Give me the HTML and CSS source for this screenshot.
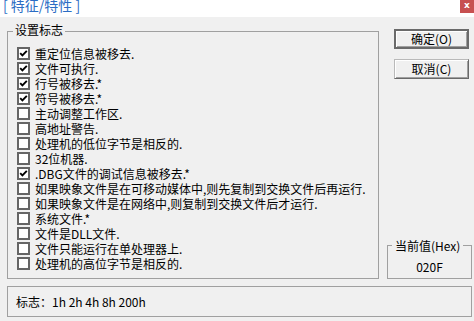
FILE: index.html
```html
<!DOCTYPE html>
<html lang="zh-CN">
<head>
<meta charset="utf-8">
<title>特征/特性</title>
<link rel="stylesheet" href="styles.css">
</head>
<body>
<div class="titlebar">
  <span class="title">[ 特征/特性 ]</span>
  <span class="close">x</span>
</div>
<div class="main">
  <div class="top">
    <fieldset class="group">
      <legend>设置标志</legend>
      <div class="opt"><span class="cb on"><svg viewBox="0 0 9 9"><path d="M1.2 4.2 L3.4 6.4 L7.8 1.8"/></svg></span>重定位信息被移去.</div>
      <div class="opt"><span class="cb on"><svg viewBox="0 0 9 9"><path d="M1.2 4.2 L3.4 6.4 L7.8 1.8"/></svg></span>文件可执行.</div>
      <div class="opt"><span class="cb on"><svg viewBox="0 0 9 9"><path d="M1.2 4.2 L3.4 6.4 L7.8 1.8"/></svg></span>行号被移去.*</div>
      <div class="opt"><span class="cb on"><svg viewBox="0 0 9 9"><path d="M1.2 4.2 L3.4 6.4 L7.8 1.8"/></svg></span>符号被移去.*</div>
      <div class="opt"><span class="cb"></span>主动调整工作区.</div>
      <div class="opt"><span class="cb"></span>高地址警告.</div>
      <div class="opt"><span class="cb"></span>处理机的低位字节是相反的.</div>
      <div class="opt"><span class="cb"></span>32位机器.</div>
      <div class="opt"><span class="cb on"><svg viewBox="0 0 9 9"><path d="M1.2 4.2 L3.4 6.4 L7.8 1.8"/></svg></span>.DBG文件的调试信息被移去.*</div>
      <div class="opt"><span class="cb"></span>如果映象文件是在可移动媒体中,则先复制到交换文件后再运行.</div>
      <div class="opt"><span class="cb"></span>如果映象文件是在网络中,则复制到交换文件后才运行.</div>
      <div class="opt"><span class="cb"></span>系统文件.*</div>
      <div class="opt"><span class="cb"></span>文件是DLL文件.</div>
      <div class="opt"><span class="cb"></span>文件只能运行在单处理器上.</div>
      <div class="opt"><span class="cb"></span>处理机的高位字节是相反的.</div>
    </fieldset>
    <div class="side">
      <button class="btn default">确定(O)</button>
      <button class="btn">取消(C)</button>
      <fieldset class="hex">
        <legend>当前值(Hex)</legend>
        <div class="val">020F</div>
      </fieldset>
    </div>
  </div>
  <div class="status">标志：1h 2h 4h 8h 200h</div>
</div>
</body>
</html>
```
FILE: styles.css
```css
html, body {
  margin: 0;
  padding: 0;
}
body {
  width: 474px;
  height: 321px;
  overflow: hidden;
  background: #f0f0f0;
  font-family: "Noto Sans CJK SC", "Noto Sans", sans-serif;
  font-size: 12px;
  color: #000;
}
.titlebar {
  height: 17px;
  background: #fff;
  display: flex;
  justify-content: space-between;
  align-items: flex-start;
  overflow: hidden;
}
.title {
  font-size: 14px;
  line-height: 11px;
  color: #2b6cc4;
  padding-left: 3px;
}
.close {
  width: 14px;
  height: 13px;
  background: #c75050;
  color: #fff;
  font-family: "DejaVu Sans", sans-serif;
  font-weight: bold;
  font-size: 9px;
  line-height: 11px;
  text-align: center;
}
.main {
  padding: 5px 2px 0 7px;
}
.top {
  display: flex;
  align-items: stretch;
}
fieldset {
  margin: 0;
  min-width: 0;
  border: 1px solid #a0a0a0;
  box-sizing: border-box;
}
.group {
  width: 372px;
  padding: 5px 0 7px 9px;
}
.group legend {
  padding: 0 2px 4px;
  margin-left: -4px;
  line-height: 15px;
}
.opt {
  display: flex;
  align-items: center;
  height: 15px;
  line-height: 15px;
  gap: 5px;
  white-space: nowrap;
}
.cb {
  width: 13px;
  height: 13px;
  box-sizing: border-box;
  border: 2px solid #656565;
  background: #fff;
  flex: none;
  display: flex;
}
.cb svg {
  width: 9px;
  height: 9px;
  fill: none;
  stroke: #000;
  stroke-width: 1.9;
}
.side {
  width: 85px;
  margin-left: 8px;
  display: flex;
  flex-direction: column;
}
.btn {
  margin: 7px 0 0 7px;
  width: 75px;
  height: 20px;
  padding: 0;
  font: inherit;
  line-height: 16px;
  color: #000;
  background: #f0f0f0;
  box-sizing: border-box;
  border: 1px solid;
  border-color: #b9b9b9 #696969 #696969 #b9b9b9;
  box-shadow: inset 1px 1px #fff, inset -1px -1px #a0a0a0;
}
.btn + .btn {
  margin-top: 10px;
}
.btn.default {
  border: 2px solid #6a6a6a;
  box-shadow: inset 1px 1px #fff, inset -1px -1px #a0a0a0;
}
.hex {
  margin-top: auto;
  padding: 6px 0 4px;
}
.hex legend {
  padding: 0 3px;
  margin-left: 4px;
  line-height: 15px;
}
.val {
  text-align: center;
  line-height: 15px;
}
.status {
  margin-top: 7px;
  width: 465px;
  height: 31px;
  box-sizing: border-box;
  border: 1px solid #a0a0a0;
  padding-left: 8px;
  line-height: 29px;
}
```
